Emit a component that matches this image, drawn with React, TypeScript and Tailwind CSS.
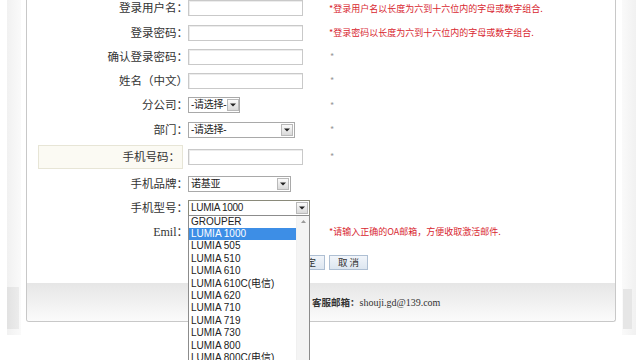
import React from "react";

const CJK = { fontFamily: '"Noto Sans CJK SC", "Noto Sans", sans-serif' };
const ARIAL = { fontFamily: '"Liberation Sans", Arial, "Noto Sans CJK SC", sans-serif' };
const SERIF = { fontFamily: '"Liberation Serif", "Times New Roman", "Noto Sans CJK SC", serif' };

function Arrow() {
  return (
    <div className="m-[1px] flex h-[12px] w-[12px] shrink-0 items-center justify-center border border-[#b9b9b9] bg-gradient-to-b from-[#fbfbfb] to-[#d9d9d9]">
      <svg width="6" height="4" viewBox="0 0 6 4">
        <path d="M0 0.5 L6 0.5 L3 3.5 Z" fill="#222" />
      </svg>
    </div>
  );
}

function Select({ w, text, focused }: { w: number; text: string; focused?: boolean }) {
  return (
    <div
      className={`flex h-[16px] items-center border bg-white ${focused ? "border-[#8a8a7a]" : "border-[#a9a9a9]"}`}
      style={{ width: w }}
    >
      <span className="flex-1 whitespace-nowrap pl-[2px] text-[10px] leading-none tracking-[-0.3px] text-[#222]" style={ARIAL}>
        {text}
      </span>
      <Arrow />
    </div>
  );
}

function Input() {
  return <div className="h-[16px] w-[115px] border border-[#c9c9c9] bg-white shadow-[inset_1px_1px_0_#ececec]" />;
}

const items = [
  "GROUPER",
  "LUMIA 1000",
  "LUMIA 505",
  "LUMIA 510",
  "LUMIA 610",
  "LUMIA 610C(电信)",
  "LUMIA 620",
  "LUMIA 710",
  "LUMIA 719",
  "LUMIA 730",
  "LUMIA 800",
  "LUMIA 800C(电信)",
  "LUMIA 820",
  "LUMIA 900",
];

function Dropdown() {
  return (
    <div className="absolute left-0 top-[15px] z-10 flex h-[160px] w-[122px] border border-[#8c8c8c] bg-white">
      <div className="flex-1">
        {items.map((it, i) => (
          <div
            key={it}
            className={`flex h-[12.4px] items-center pl-[2px] text-[10px] leading-none ${
              i === 1 ? "bg-[#3d8ee6] text-white" : "text-[#222]"
            }`}
            style={ARIAL}
          >
            {it}
          </div>
        ))}
      </div>
      <div className="flex w-[13px] justify-center border-l border-[#f0f0f0] bg-[#f4f4f4] pt-[4px]">
        <svg width="5" height="3" viewBox="0 0 5 3">
          <path d="M0 3 L2.5 0 L5 3 Z" fill="#9a9a9a" />
        </svg>
      </div>
    </div>
  );
}

type Row = {
  label: string;
  h: number;
  field: React.ReactNode;
  hint?: "red" | "star";
  hintText?: string;
  highlight?: boolean;
  serif?: boolean;
  dropdown?: boolean;
};

const rows: Row[] = [
  { label: "登录用户名：", h: 25, field: <Input />, hint: "red", hintText: "*登录用户名以长度为六到十六位内的字母或数字组合." },
  { label: "登录密码：", h: 24, field: <Input />, hint: "red", hintText: "*登录密码以长度为六到十六位内的字母或数字组合." },
  { label: "确认登录密码：", h: 24, field: <Input />, hint: "star" },
  { label: "姓名（中文）", h: 24, field: <Input />, hint: "star" },
  { label: "分公司：", h: 25, field: <Select w={52} text="-请选择-" />, hint: "star" },
  { label: "部门：", h: 24, field: <Select w={107} text="-请选择-" />, hint: "star" },
  { label: "手机号码：", h: 30, field: <Input />, hint: "star", highlight: true },
  { label: "手机品牌：", h: 24, field: <Select w={103} text="诺基亚" /> },
  { label: "手机型号：", h: 24, field: <Select w={122} text="LUMIA 1000" focused />, dropdown: true },
  { label: "Emil", h: 24, field: <Input />, hint: "red", hintText: "*请输入正确的OA邮箱，方便收取激活邮件.", serif: true },
];

export default function App() {
  return (
    <div className="relative flex h-[360px] w-[640px] overflow-hidden bg-white" style={CJK}>
      {/* left gutter */}
      <div className="flex w-[26px] shrink-0 pl-[7px]">
        <div className="flex h-[335px] w-[14px] flex-col bg-gradient-to-r from-[#f1f1f1] to-[#fafafa]">
          <div className="h-[287px]" />
          <div className="h-[42px] w-[12px] bg-gradient-to-r from-[#e2e2e2] to-[#ececec]" />
        </div>
      </div>

      {/* panel */}
      <div className="flex h-[322px] w-[590px] shrink-0 flex-col rounded-b-[3px] border-x border-b border-[#c8c8c8] bg-white">
        <div className="relative mt-[-4.5px] flex flex-col">
          {rows.map((r) => (
            <div key={r.label} className="flex items-center" style={{ height: r.h }}>
              <div className="flex w-[161px] shrink-0 items-center justify-end">
                {r.highlight ? (
                  <div className="mr-[5px] flex h-[24px] w-[145px] items-center justify-end border border-[#e7e5d6] bg-[#fbfaf3] pr-[2px] text-[11.5px] text-[#333]">
                    {r.label}
                  </div>
                ) : r.serif ? (
                  <span className="text-[11.5px] text-[#333]">
                    <span style={SERIF} className="text-[12px]">Emil</span>：
                  </span>
                ) : (
                  <span className="text-[11.5px] text-[#333]">{r.label}</span>
                )}
              </div>
              <div className="relative flex w-[141px] shrink-0 items-center">
                {r.field}
                {r.dropdown && <Dropdown />}
              </div>
              <div className="flex items-center">
                {r.hint === "red" && (
                  <span className="text-[9px] leading-none text-[#d8262f]">{r.hintText}</span>
                )}
                {r.hint === "star" && <span className="pl-[1px] text-[9px] leading-none text-[#999]">*</span>}
              </div>
            </div>
          ))}
          <div className="flex h-[38px] items-center gap-[4px] pl-[259px]">
            <div className="flex h-[15px] w-[39px] items-center justify-center border border-[#aebfd3] bg-gradient-to-b from-[#f1f5fa] to-[#dde6f0] text-[9.5px] text-[#333]">
              确 定
            </div>
            <div className="flex h-[15px] w-[39px] items-center justify-center border border-[#aebfd3] bg-gradient-to-b from-[#f1f5fa] to-[#dde6f0] text-[9.5px] text-[#333]">
              取 消
            </div>
          </div>
        </div>
        <div className="mt-auto flex h-[38px] items-center rounded-b-[3px] bg-gradient-to-b from-[#e6e6e6] to-[#fbfbfb] pl-[285px]">
          <span className="text-[9.5px] font-bold text-[#333]">客服邮箱：</span>
          <span className="text-[10px] text-[#333]" style={SERIF}>
            shouji.gd@139.com
          </span>
        </div>
      </div>

      {/* right gutter */}
      <div className="flex w-[24px] shrink-0 pl-[6px]">
        <div className="flex h-[335px] w-[14px] flex-col bg-gradient-to-r from-[#fafafa] to-[#f1f1f1]">
          <div className="h-[289px]" />
          <div className="ml-[1px] h-[40px] w-[9px] bg-[#e6e6e6]" />
        </div>
      </div>
    </div>
  );
}
